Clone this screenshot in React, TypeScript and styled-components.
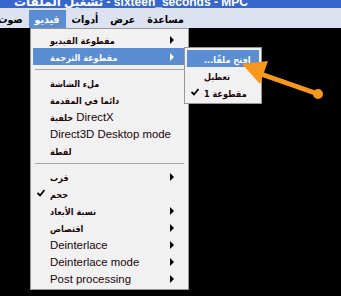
import React from "react";
import styled, { createGlobalStyle } from "styled-components";

const GlobalStyle = createGlobalStyle`
  html, body {
    margin: 0;
    padding: 0;
    background: #000;
  }
  body {
    font-family: "Liberation Sans", "DejaVu Sans", sans-serif;
    font-size: 12px;
  }
`;

const Window = styled.div`
  width: 341px;
  height: 296px;
  overflow: hidden;
  background: #000;
  display: flex;
  flex-direction: column;
`;

const TitleBar = styled.div`
  height: 8px;
  background: #3767cc;
  color: #fff;
  display: flex;
  align-items: flex-end;
  overflow: hidden;
  padding-left: 14px;
  font-weight: bold;
  font-size: 12px;
  white-space: nowrap;
`;

const TitleText = styled.span`
  line-height: 14px;
  margin-bottom: -1px;
`;

const MenuBar = styled.div`
  height: 20px;
  background: #dce2ef;
  display: flex;
  align-items: flex-end;
  overflow: hidden;
`;

const MenuBarStrip = styled.div`
  display: flex;
  margin-left: -8px;
  height: 18px;
`;

const BarItem = styled.div<{ $open?: boolean }>`
  display: flex;
  align-items: center;
  padding: 0 6px 0 6px;
  height: 18px;
  font-weight: bold;
  font-family: "DejaVu Sans Condensed", "DejaVu Sans", sans-serif;
  font-size: 10.5px;
  color: ${(p) => (p.$open ? "#fff" : "#000")};
  background: ${(p) => (p.$open ? "#5b8dd3" : "transparent")};
`;

const Workspace = styled.div`
  position: relative;
  flex: 1;
  background: #000;
`;

const Menu = styled.div<{ $left: number; $top: number; $width: number }>`
  position: absolute;
  left: ${(p) => p.$left}px;
  top: ${(p) => p.$top}px;
  width: ${(p) => p.$width}px;
  box-sizing: border-box;
  background: #f1f1f1;
  border: 1px solid #979797;
  padding: 2px 2px;
  display: flex;
  flex-direction: column;
`;

const Row = styled.div<{ $active?: boolean }>`
  height: 17px;
  display: flex;
  align-items: center;
  position: relative;
  padding-left: 17px;
  padding-right: 12px;
  background: ${(p) => (p.$active ? "#5b8dd3" : "transparent")};
  color: ${(p) => (p.$active ? "#fff" : "#1a0508")};
  white-space: nowrap;
`;

const Label = styled.span`
  flex: 1;
  font-size: 11.4px;
`;

const Ar = styled.span`
  font-family: "DejaVu Sans Condensed", "DejaVu Sans", sans-serif;
  font-weight: bold;
  font-size: 9px;
`;

const CheckSlot = styled.span`
  position: absolute;
  left: 4px;
  top: 4px;
  width: 8px;
  height: 8px;
  display: flex;
`;

const Arrow = styled.span<{ $active?: boolean }>`
  width: 0;
  height: 0;
  border-top: 4px solid transparent;
  border-bottom: 4px solid transparent;
  border-left: 4px solid ${(p) => (p.$active ? "#fff" : "#000")};
`;

const Separator = styled.div`
  height: 9px;
  display: flex;
  align-items: center;
  padding: 0 2px;
  &::after {
    content: "";
    flex: 1;
    height: 1px;
    background: #a6a6a6;
  }
`;

const Annotation = styled.svg`
  position: absolute;
  left: 0;
  top: 0;
  pointer-events: none;
`;

const Check = () => (
  <CheckSlot>
    <svg width="8" height="8" viewBox="0 0 8 8">
      <path d="M0.5 4 L3 6.5 L7.5 1" stroke="#000" strokeWidth="1.8" fill="none" />
    </svg>
  </CheckSlot>
);

type Item =
  | { sep: true }
  | {
      sep?: false;
      ar?: string;
      en?: string;
      sub?: boolean;
      checked?: boolean;
      active?: boolean;
    };

const mainItems: Item[] = [
  { ar: "مقطوعة الفيديو", sub: true },
  { ar: "مقطوعة الترجمة", sub: true, active: true },
  { sep: true },
  { ar: "ملء الشاشة" },
  { ar: "دائما في المقدمة" },
  { ar: "خلفية", en: " DirectX" },
  { en: "Direct3D Desktop mode" },
  { ar: "لقطة" },
  { sep: true },
  { ar: "قرب", sub: true },
  { ar: "حجم", checked: true },
  { ar: "نسبة الأبعاد", sub: true },
  { ar: "اقتصاص", sub: true },
  { en: "Deinterlace", sub: true },
  { en: "Deinterlace mode", sub: true },
  { en: "Post processing", sub: true },
];

const subItems: Item[] = [
  { ar: "...افتح ملفًا", active: true },
  { ar: "تعطيل" },
  { ar: "مقطوعة 1", checked: true },
];

const renderItems = (items: Item[]) =>
  items.map((it, i) =>
    it.sep ? (
      <Separator key={i} />
    ) : (
      <Row key={i} $active={it.active}>
        {it.checked && <Check />}
        <Label>
          {it.ar && <Ar>{it.ar}</Ar>}
          {it.en}
        </Label>
        {it.sub && <Arrow $active={it.active} />}
      </Row>
    )
  );

const App: React.FC = () => {
  return (
    <Window>
      <GlobalStyle />
      <TitleBar>
        <TitleText>تشغيل الملفات - sixteen_seconds - MPC</TitleText>
      </TitleBar>
      <MenuBar>
        <MenuBarStrip>
          <BarItem>صوت</BarItem>
          <BarItem $open>فيديو</BarItem>
          <BarItem>أدوات</BarItem>
          <BarItem>عرض</BarItem>
          <BarItem>مساعدة</BarItem>
        </MenuBarStrip>
      </MenuBar>
      <Workspace>
        <Menu $left={30} $top={0} $width={159}>
          {renderItems(mainItems)}
        </Menu>
        <Menu $left={184} $top={19} $width={78}>
          {renderItems(subItems)}
        </Menu>
        <Annotation width="341" height="268" viewBox="0 28 341 268">
          <line x1="258" y1="73" x2="318" y2="94" stroke="#f7981d" strokeWidth="5" strokeLinecap="round" />
          <circle cx="318" cy="94" r="5" fill="#f7981d" />
          <polygon points="242,64 268,61 260,84" fill="#f7981d" />
        </Annotation>
      </Workspace>
    </Window>
  );
};

export default App;
